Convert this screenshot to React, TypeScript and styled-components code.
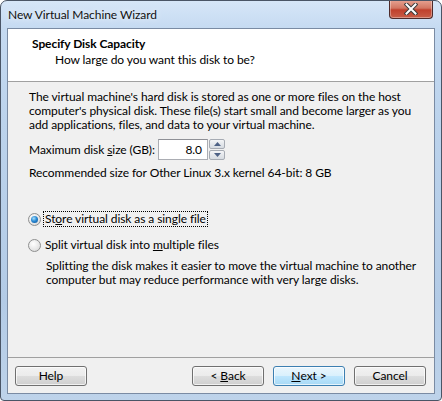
import React from "react";
import styled, { createGlobalStyle } from "styled-components";

const Global = createGlobalStyle`
  html, body { margin: 0; padding: 0; background: #ffffff; }
  body { font-family: "Lato", "Noto Sans", sans-serif; font-size: 12px; color: #000; white-space: nowrap; letter-spacing: -0.08px; }
  * { box-sizing: border-box; }
`;

const Frame = styled.div`
  width: 442px;
  height: 401px;
  display: flex;
  flex-direction: column;
  border: 1px solid #4a5566;
  border-radius: 7px 7px 4px 4px;
  background: linear-gradient(180deg, #d6e6f8 0px, #c5daf1 28px, #bcd3ec 120px, #b3cbe6 300px, #bed3ea 401px);
  overflow: hidden;
`;

const TitleBar = styled.div`
  height: 27px;
  display: flex;
  align-items: flex-start;
  justify-content: space-between;
  padding-left: 7px;
  padding-right: 8px;
`;

const TitleText = styled.span`
  margin-top: 6px;
  font-size: 12px;
  line-height: 16px;
  color: #111;
  text-shadow: 0 0 6px rgba(255, 255, 255, 0.9);
`;

const CloseButton = styled.div`
  width: 44px;
  height: 19px;
  margin-top: -1px;
  border: 1px solid #4e2b2b;
  border-top: none;
  border-radius: 0 0 4px 4px;
  background: linear-gradient(180deg, #e8a493 0%, #d27662 45%, #c0402c 55%, #c85e48 100%);
  box-shadow: inset 0 0 0 1px rgba(255, 255, 255, 0.35);
  display: flex;
  align-items: center;
  justify-content: center;
`;

const Client = styled.div`
  margin: 0 6px 6px 6px;
  flex: 1;
  display: flex;
  flex-direction: column;
  border: 1px solid #7a8ba3;
  background: #f0f0f0;
`;

const Header = styled.div`
  background: #ffffff;
  height: 53px;
  border-bottom: 1px solid #a0a0a0;
  padding: 7px 0 0 24px;
  display: flex;
  flex-direction: column;
`;

const HeaderTitle = styled.div`
  font-weight: bold;
  line-height: 16px;
`;

const HeaderSub = styled.div`
  line-height: 16px;
  padding-left: 23px;
`;

const Body = styled.div`
  flex: 1;
  padding: 8px 20px 0 21px;
  display: flex;
  flex-direction: column;
`;

const Para = styled.p<{ $indent?: number; $top?: number; $lh?: number }>`
  margin: ${(p) => p.$top ?? 0}px 0 0 ${(p) => p.$indent ?? 0}px;
  line-height: ${(p) => p.$lh ?? 14}px;
`;

const SizeRow = styled.div`
  margin-top: 7px;
  display: flex;
  align-items: center;
  height: 21px;
`;

const SizeLabel = styled.span`
  width: 129px;
`;

const Edit = styled.div`
  width: 50px;
  height: 21px;
  border: 1px solid #abadb3;
  border-top-color: #8e9096;
  background: #fff;
  text-align: right;
  padding-right: 5px;
  line-height: 19px;
`;

const Spin = styled.div`
  display: flex;
  flex-direction: column;
  gap: 1px;
  margin-left: 1px;
`;

const SpinBtn = styled.div`
  width: 16px;
  height: 10px;
  border: 1px solid #a6abb3;
  border-radius: 2px;
  background: linear-gradient(180deg, #f4f5f7 0%, #e4e7eb 50%, #d7dce2 100%);
  display: flex;
  align-items: center;
  justify-content: center;
`;

const RadioRow = styled.div<{ $top: number }>`
  margin-top: ${(p) => p.$top}px;
  display: flex;
  align-items: center;
  height: 16px;
  margin-left: -1px;
`;

const RadioCircle = styled.span<{ $on?: boolean }>`
  width: 13px;
  height: 13px;
  border-radius: 50%;
  border: 1px solid #8e8f8f;
  background: radial-gradient(circle at 40% 35%, #ffffff 0%, #e6e6e6 60%, #cfcfcf 100%);
  display: flex;
  align-items: center;
  justify-content: center;
  flex-shrink: 0;
  &::after {
    content: "";
    display: ${(p) => (p.$on ? "block" : "none")};
    width: 7px;
    height: 7px;
    border-radius: 50%;
    background: radial-gradient(circle at 40% 35%, #a9e0fb 0%, #2a8ad4 45%, #0e4f93 100%);
  }
`;

const RadioLabel = styled.span<{ $focus?: boolean }>`
  margin-left: 2px;
  padding: 0 1px;
  line-height: 14px;
  border: 1px dotted ${(p) => (p.$focus ? "#000" : "transparent")};
`;

const Footer = styled.div`
  border-top: 1px solid #a0a0a0;
  height: 36px;
  padding: 8px 7px 0 7px;
  display: flex;
  align-items: flex-start;
`;

const Button = styled.div<{ $default?: boolean; $gap?: number }>`
  width: 72px;
  height: 20px;
  margin-left: ${(p) => p.$gap ?? 0}px;
  border: 1px solid ${(p) => (p.$default ? "#3c7fb1" : "#707070")};
  border-radius: 3px;
  background: ${(p) =>
    p.$default
      ? "linear-gradient(180deg, #eaf6fd 0%, #d9f0fc 50%, #bee6fd 51%, #a7d9f5 100%)"
      : "linear-gradient(180deg, #f2f2f2 0%, #ebebeb 50%, #dddddd 51%, #cfcfcf 100%)"};
  box-shadow: inset 0 0 0 1px rgba(255, 255, 255, 0.7);
  display: flex;
  align-items: center;
  justify-content: center;
  line-height: 16px;
  white-space: pre;
`;

const U = styled.span`
  text-decoration: underline;
`;

const CloseIcon = () => (
  <svg width="14" height="12" viewBox="0 0 14 12">
    <path d="M2.5 1.5 L11.5 10.5 M11.5 1.5 L2.5 10.5" stroke="#3b3b3b" strokeWidth="4" strokeLinecap="square" />
    <path d="M2.5 1.5 L11.5 10.5 M11.5 1.5 L2.5 10.5" stroke="#ffffff" strokeWidth="2" strokeLinecap="square" />
  </svg>
);

const Arrow = ({ up }: { up?: boolean }) => (
  <svg width="7" height="4" viewBox="0 0 7 4">
    <path d={up ? "M0 4 L3.5 0 L7 4 Z" : "M0 0 L3.5 4 L7 0 Z"} fill="#4d6185" />
  </svg>
);

export default function App() {
  return (
    <>
      <Global />
      <Frame>
        <TitleBar>
          <TitleText>New Virtual Machine Wizard</TitleText>
          <CloseButton>
            <CloseIcon />
          </CloseButton>
        </TitleBar>
        <Client>
          <Header>
            <HeaderTitle>Specify Disk Capacity</HeaderTitle>
            <HeaderSub>How large do you want this disk to be?</HeaderSub>
          </Header>
          <Body>
            <Para>
              The virtual machine's hard disk is stored as one or more files on the host
              <br />
              computer's physical disk. These file(s) start small and become larger as you
              <br />
              add applications, files, and data to your virtual machine.
            </Para>
            <SizeRow>
              <SizeLabel>
                Maximum disk <U>s</U>ize (GB):
              </SizeLabel>
              <Edit>8.0</Edit>
              <Spin>
                <SpinBtn>
                  <Arrow up />
                </SpinBtn>
                <SpinBtn>
                  <Arrow />
                </SpinBtn>
              </Spin>
            </SizeRow>
            <Para $top={6}>Recommended size for Other Linux 3.x kernel 64-bit: 8 GB</Para>
            <RadioRow $top={31}>
              <RadioCircle $on />
              <RadioLabel $focus>
                St<U>o</U>re virtual disk as a single file
              </RadioLabel>
            </RadioRow>
            <RadioRow $top={10}>
              <RadioCircle />
              <RadioLabel>
                Split virtual disk into <U>m</U>ultiple files
              </RadioLabel>
            </RadioRow>
            <Para $indent={17} $top={6} $lh={14}>
              Splitting the disk makes it easier to move the virtual machine to another
              <br />
              computer but may reduce performance with very large disks.
            </Para>
          </Body>
          <Footer>
            <Button>Help</Button>
            <Button $gap={105}>
              {"< "}
              <U>B</U>ack
            </Button>
            <Button $default $gap={9}>
              <U>N</U>
              {"ext >"}
            </Button>
            <Button $gap={9}>Cancel</Button>
          </Footer>
        </Client>
      </Frame>
    </>
  );
}
